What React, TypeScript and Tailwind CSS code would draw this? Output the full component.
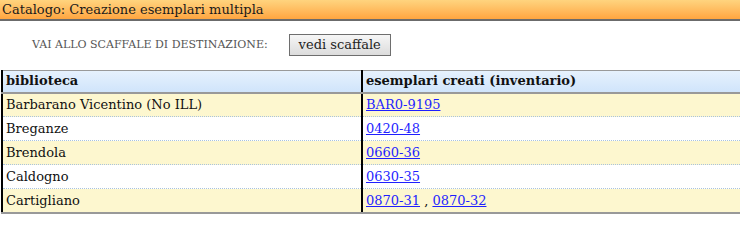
import React from "react";

const rows = [
  { name: "Barbarano Vicentino (No ILL)", inv: ["BAR0-9195"] },
  { name: "Breganze", inv: ["0420-48"] },
  { name: "Brendola", inv: ["0660-36"] },
  { name: "Caldogno", inv: ["0630-35"] },
  { name: "Cartigliano", inv: ["0870-31", "0870-32"] },
];

export default function App() {
  return (
    <div className="font-['DejaVu_Serif'] w-[740px] h-[245px] bg-white text-[13px] text-[#111]">
      <div className="font-['DejaVu_Serif'] h-[21px] bg-gradient-to-b from-[#ffd47e] to-[#ffa53f] border-b-2 border-[#6b6b6b] pl-[2px] leading-[19px] text-[#1a1a1a]">
        Catalogo: Creazione esemplari multipla
      </div>
      <div className="flex items-center h-[22px] mt-[13px]">
        <span className="font-['DejaVu_Serif'] ml-[32px] text-[11px] text-[#555]">VAI ALLO SCAFFALE DI DESTINAZIONE:</span>
        <button className="font-['DejaVu_Serif'] ml-[21px] h-[22px] w-[102px] border border-[#6e6e6e] bg-gradient-to-b from-[#f6f6f6] to-[#dcdcdc] text-[13px] text-[#222] leading-[18px]">
          vedi scaffale
        </button>
      </div>
      <table className="font-['DejaVu_Serif'] mt-[14px] ml-[1px] w-[739px] border-collapse">
        <thead>
          <tr className="bg-gradient-to-b from-[#e6f1fd] to-[#cfe4fb]">
            <th className="font-['DejaVu_Serif'] w-[360px] h-[22px] border-t border-t-[#999] border-b-2 border-b-[#999] border-l-2 border-l-black border-r-2 border-r-black text-left font-bold pl-[3px] py-0 leading-[20px]">
              biblioteca
            </th>
            <th className="font-['DejaVu_Serif'] h-[22px] border-t border-t-[#999] border-b-2 border-b-[#999] text-left font-bold pl-[3px] py-0 leading-[20px]">
              esemplari creati (inventario)
            </th>
          </tr>
        </thead>
        <tbody>
          {rows.map((r, i) => {
            const last = i === rows.length - 1;
            const bg = i % 2 === 0 ? "bg-[#fdf7cf]" : "bg-white";
            return (
              <tr key={r.name} className={bg}>
                <td
                  className={
                    last
                      ? "font-['DejaVu_Serif'] h-[24px] pl-[3px] py-0 border-l-2 border-l-black border-r-2 border-r-black border-b-2 border-b-[#999]"
                      : "font-['DejaVu_Serif'] h-[24px] pl-[3px] py-0 border-l-2 border-l-black border-r-2 border-r-black border-b border-b-[#a9c3de] [border-bottom-style:dotted]"
                  }
                >
                  {r.name}
                </td>
                <td
                  className={
                    last
                      ? "font-['DejaVu_Serif'] h-[24px] pl-[3px] py-0 border-b-2 border-b-[#999]"
                      : "font-['DejaVu_Serif'] h-[24px] pl-[3px] py-0 border-b border-b-[#a9c3de] [border-bottom-style:dotted]"
                  }
                >
                  {r.inv.map((v, j) => (
                    <React.Fragment key={v}>
                      {j > 0 && " , "}
                      <a href="#" className="font-['DejaVu_Serif'] text-[#1f1fff] underline">
                        {v}
                      </a>
                    </React.Fragment>
                  ))}
                </td>
              </tr>
            );
          })}
        </tbody>
      </table>
    </div>
  );
}
